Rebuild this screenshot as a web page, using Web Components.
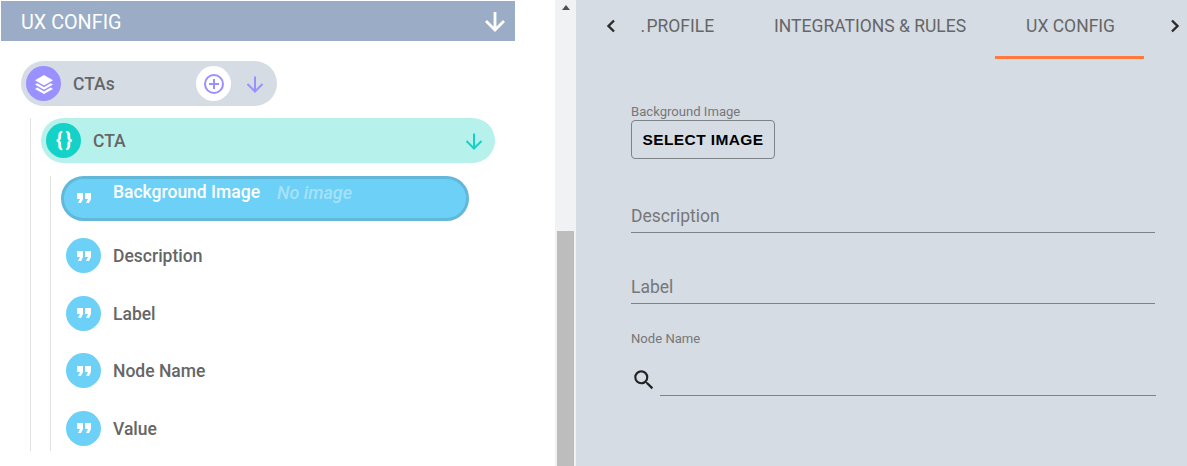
<!DOCTYPE html>
<html>
<head>
<meta charset="utf-8">
<title>UX Config</title>
<style>
  html, body { margin: 0; height: 466px; overflow: hidden; background: #fff; font-family: Roboto, "Liberation Sans", sans-serif; }
</style>
</head>
<body>
<config-page>
  <section-header slot="left" title="UX CONFIG"></section-header>
  <tree-node slot="left" kind="list" label="CTAs" addable top>
    <tree-node kind="object" label="CTA">
      <tree-node kind="text" label="Background Image" hint="No image" selected></tree-node>
      <tree-node kind="text" label="Description"></tree-node>
      <tree-node kind="text" label="Label"></tree-node>
      <tree-node kind="text" label="Node Name"></tree-node>
      <tree-node kind="text" label="Value"></tree-node>
    </tree-node>
  </tree-node>
  <fake-scrollbar slot="bar"></fake-scrollbar>
  <tab-bar slot="right"></tab-bar>
  <image-field slot="right" label="Background Image"></image-field>
  <text-field slot="right" label="Description"></text-field>
  <text-field slot="right" label="Label" class="tight"></text-field>
  <search-field slot="right" label="Node Name"></search-field>
</config-page>

<script>
const ARROW = '<svg viewBox="0 0 24 24" width="100%" height="100%" fill="none" stroke="currentColor" stroke-width="2.4"><path d="M12 3v18M3 12l9 9 9-9"/></svg>';

class ConfigPage extends HTMLElement {
    constructor() {
        super();
        this.attachShadow({ mode: 'open' });
        this.shadowRoot.innerHTML = `
            <style>
                :host { display: grid; grid-template-columns: 555px 21px 611px; height: 466px; }
                .left { padding: 1px 40px 0 1px; min-width: 0; background: #fff; }
                .right { background: #d5dce4; min-width: 0; }
            </style>
            <div class="left"><slot name="left"></slot></div>
            <slot name="bar"></slot>
            <div class="right"><slot name="right"></slot></div>
        `;
    }
}

class SectionHeader extends HTMLElement {
    constructor() {
        super();
        this.attachShadow({ mode: 'open' });
        this.shadowRoot.innerHTML = `
            <style>
                :host { display: flex; align-items: center; justify-content: space-between; height: 40px; padding: 0 8px 0 20px; background: #9aacc6; color: #fff; font-size: 19.8px; }
                .title { padding-top: 2px; }
                .arrow { width: 24px; height: 24px; margin-top: -1px; }
                svg { stroke-width: 2.8; }
            </style>
            <span class="title">${this.getAttribute('title')}</span>
            <span class="arrow">${ARROW}</span>
        `;
    }
}

class TreeNode extends HTMLElement {
    constructor() {
        super();
        this.attachShadow({ mode: 'open' });
        const kind = this.getAttribute('kind');
        const hint = this.getAttribute('hint');
        const icons = {
            list: '<svg viewBox="0 0 24 24" width="24" height="24" fill="#fff"><path d="M12 3 3 8.2l9 5.2 9-5.2z"/><path d="M5.4 11.2 3 12.6l9 5.2 9-5.2-2.4-1.4L12 15.2z"/><path d="M5.4 15.6 3 17l9 5 9-5-2.4-1.4L12 19.6z"/></svg>',
            object: '<span class="braces">{ }</span>',
            text: '<svg viewBox="0 0 24 24" width="24" height="24" fill="#fff"><path d="M6 17h3l2-4V7H5v6h3zm8 0h3l2-4V7h-6v6h3z"/></svg>'
        };
        this.shadowRoot.innerHTML = `
            <style>
                :host { display: block; font-size: 17.5px; font-weight: 500; color: #666; }
                :host([top]) { margin: 20px 0 0 20px; }
                .pill { display: flex; align-items: center; box-sizing: border-box; height: 45px; border-radius: 23px; padding-left: 5px; }
                .kids { margin: 12px 0 0 9px; padding-left: 10px; border-left: 1px solid #e2e2e2; }
                .circle { flex: none; width: 35px; height: 35px; border-radius: 50%; display: flex; align-items: center; justify-content: center; color: #fff; }
                .name { margin-left: 12px; }
                .braces { font-size: 20px; font-weight: 700; letter-spacing: -1px; line-height: 1; margin-top: -2px; }
                .arrow { width: 20px; height: 20px; }
                .add { flex: none; width: 35px; height: 35px; border-radius: 50%; background: #fff; display: flex; align-items: center; justify-content: center; margin-left: auto; }

                :host([kind="list"]) .pill { width: 256px; background: #d5dce4; }
                :host([kind="list"]) .circle { background: #9b90ff; }
                :host([kind="list"]) .arrow { color: #9b90ff; margin: 0 12px 0 14px; }

                :host([kind="object"]) { margin-top: 12px; }
                :host([kind="object"]) .pill { width: 454px; background: #b7f1ec; }
                :host([kind="object"]) .circle { background: #14d2c8; }
                :host([kind="object"]) .arrow { color: #14d2c8; margin: 0 11px 0 auto; }
                :host([kind="object"]) .kids { margin-top: 12.6px; }

                :host([kind="text"]) { margin-bottom: 12.5px; }
                :host([kind="text"]:last-child) { margin-bottom: 0; padding-bottom: .4px; }
                :host([kind="text"]) .pill { width: 408px; }
                :host([kind="text"]) .circle { background: #6dd0f7; }
                :host([kind="text"]) .name { margin-top: 1px; }
                :host([selected]) .pill { background: #6dd0f7; border: 3px solid #62b8d9; padding-left: 2px; align-items: flex-start; }
                :host([selected]) .circle { margin-top: 2px; }
                :host([selected]) .name { color: #fff; margin-top: 3px; }
                .hint { font-style: italic; font-size: 18px; color: #a6e2fa; margin: 3px 0 0 17px; }
            </style>
            <div class="pill">
                <span class="circle">${icons[kind]}</span>
                <span class="name">${this.getAttribute('label')}</span>
                ${hint ? `<span class="hint">${hint}</span>` : ''}
                ${this.hasAttribute('addable') ? `<span class="add"><svg viewBox="0 0 24 24" width="24" height="24" fill="none" stroke="#9b90ff" stroke-width="2"><circle cx="12" cy="12" r="9"/><path d="M12 7v10M7 12h10"/></svg></span>` : ''}
                ${kind !== 'text' ? `<span class="arrow">${ARROW}</span>` : ''}
            </div>
            ${kind !== 'text' ? '<div class="kids"><slot></slot></div>' : ''}
        `;
    }
}

class FakeScrollbar extends HTMLElement {
    constructor() {
        super();
        this.attachShadow({ mode: 'open' });
        this.shadowRoot.innerHTML = `
            <style>
                :host { display: flex; flex-direction: column; align-items: center; height: 466px; background: #f1f2f3; }
                .up { flex: none; width: 0; height: 0; margin-top: 5px; border: 4.5px solid transparent; border-top: 0; border-bottom: 5px solid #505050; }
                .gap { flex: none; height: 221px; }
                .thumb { flex: 1; width: 17px; background: #bdbdbd; }
            </style>
            <div class="up"></div>
            <div class="gap"></div>
            <div class="thumb"></div>
        `;
    }
}

class TabBar extends HTMLElement {
    constructor() {
        super();
        this.attachShadow({ mode: 'open' });
        this.shadowRoot.innerHTML = `
            <style>
                :host { display: flex; align-items: stretch; height: 59px; font-size: 17.5px; color: #666; }
                .chev { flex: none; width: 24px; display: flex; align-items: center; justify-content: center; padding-bottom: 7px; color: #2b2b2b; }
                .left { margin-left: 23px; }
                .right { margin-left: 19px; }
                .tabs { display: flex; flex: 1; min-width: 0; overflow: hidden; justify-content: flex-end; }
                .tab { flex: none; display: flex; align-items: center; padding: 0 29px 5px 31px; border-bottom: 3px solid transparent; box-sizing: border-box; }
                .tab.first { padding-left: 0; word-spacing: -3px; }
                .tab.active { border-bottom-color: #ff7a3d; }
            </style>
            <span class="chev left"><svg viewBox="0 0 10 14" width="10" height="14" fill="none" stroke="currentColor" stroke-width="2.4"><path d="M8 1.5 2.5 7 8 12.5"/></svg></span>
            <div class="tabs">
                <span class="tab first">. PROFILE</span>
                <span class="tab">INTEGRATIONS &amp; RULES</span>
                <span class="tab active">UX CONFIG</span>
            </div>
            <span class="chev right"><svg viewBox="0 0 10 14" width="10" height="14" fill="none" stroke="currentColor" stroke-width="2.4"><path d="M2 1.5 7.5 7 2 12.5"/></svg></span>
        `;
    }
}

class ImageField extends HTMLElement {
    constructor() {
        super();
        this.attachShadow({ mode: 'open' });
        this.shadowRoot.innerHTML = `
            <style>
                :host { display: block; margin: 46px 32px 0 55px; font-size: 13.1px; color: #777; }
                label { display: block; line-height: 14px; margin-bottom: 1px; }
                button { display: block; box-sizing: border-box; width: 144px; height: 39px; padding: 0; background: transparent; border: 1px solid #7d8287; border-radius: 4px; font: bold 15.5px "Liberation Sans", Arial, sans-serif; letter-spacing: .4px; color: #000; }
            </style>
            <label>${this.getAttribute('label')}</label>
            <button>SELECT IMAGE</button>
        `;
    }
}

class TextField extends HTMLElement {
    constructor() {
        super();
        this.attachShadow({ mode: 'open' });
        this.shadowRoot.innerHTML = `
            <style>
                :host { display: block; margin: 44px 32px 0 55px; height: 30px; box-sizing: border-box; border-bottom: 1px solid #7d8287; font-size: 17.5px; line-height: 26px; color: #777; }
                :host(.tight) { margin-top: 41px; }
            </style>
            ${this.getAttribute('label')}
        `;
    }
}

class SearchField extends HTMLElement {
    constructor() {
        super();
        this.attachShadow({ mode: 'open' });
        this.shadowRoot.innerHTML = `
            <style>
                :host { display: block; margin: 28px 31px 0 55px; font-size: 13.1px; color: #777; }
                label { display: block; line-height: 14px; }
                .row { display: flex; align-items: flex-end; margin-top: 17px; }
                svg { flex: none; margin: 0 3px 3px 0; }
                .input { flex: 1; height: 32px; border-bottom: 1px solid #7d8287; }
            </style>
            <label>${this.getAttribute('label')}</label>
            <div class="row">
                <svg viewBox="0 0 24 24" width="26" height="26" fill="#222"><path d="M15.5 14h-.79l-.28-.27A6.47 6.47 0 0 0 16 9.5 6.5 6.5 0 1 0 9.5 16c1.61 0 3.09-.59 4.23-1.57l.27.28v.79l5 4.99L20.49 19l-4.99-5zm-6 0C7.01 14 5 11.99 5 9.5S7.01 5 9.5 5 14 7.01 14 9.5 11.99 14 9.5 14z"/></svg>
                <div class="input"></div>
            </div>
        `;
    }
}

customElements.define('config-page', ConfigPage);
customElements.define('section-header', SectionHeader);
customElements.define('tree-node', TreeNode);
customElements.define('fake-scrollbar', FakeScrollbar);
customElements.define('tab-bar', TabBar);
customElements.define('image-field', ImageField);
customElements.define('text-field', TextField);
customElements.define('search-field', SearchField);
</script>
</body>
</html>
